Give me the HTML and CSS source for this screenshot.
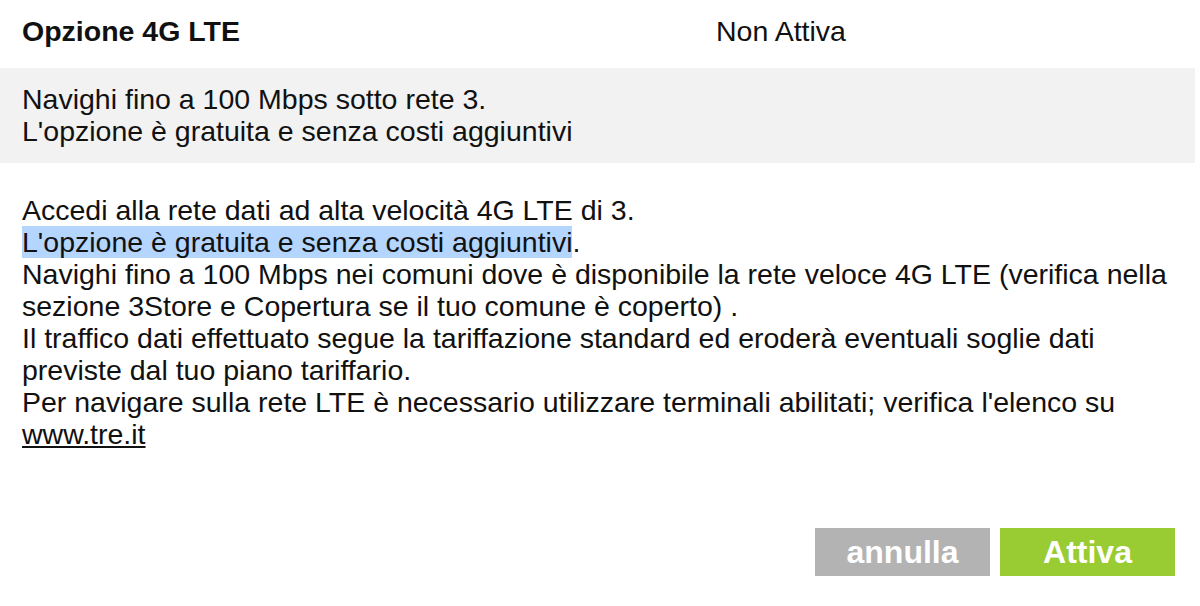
FILE: index.html
```html
<!DOCTYPE html>
<html lang="it">
<head>
    <meta charset="UTF-8">
    <meta name="viewport" content="width=device-width, initial-scale=1.0">
    <title>Opzione 4G LTE</title>
    <link rel="stylesheet" href="styles.css">
</head>
<body>
    <div class="panel">
        <div class="option-head">
            <div class="option-name">Opzione 4G LTE</div>
            <div class="option-state">Non Attiva</div>
        </div>

        <div class="summary">
            Navighi fino a 100 Mbps sotto rete 3.<br>
            L'opzione è gratuita e senza costi aggiuntivi
        </div>

        <div class="details">
            Accedi alla rete dati ad alta velocità 4G LTE di 3.<br>
            <span class="selected">L'opzione è gratuita e senza costi aggiuntivi</span>.<br>
            Navighi fino a 100 Mbps nei comuni dove è disponibile la rete veloce 4G LTE (verifica nella sezione 3Store e Copertura se il tuo comune è coperto) .<br>
            Il traffico dati effettuato segue la tariffazione standard ed eroderà eventuali soglie dati previste dal tuo piano tariffario.<br>
            Per navigare sulla rete LTE è necessario utilizzare terminali abilitati; verifica l'elenco su <a href="#">www.tre.it</a>
        </div>

        <div class="actions">
            <button class="btn btn-cancel" type="button">annulla</button>
            <button class="btn btn-confirm" type="button">Attiva</button>
        </div>
    </div>
</body>
</html>
```

FILE: styles.css
```css
* {
    margin: 0;
    padding: 0;
    box-sizing: border-box;
}

body {
    background: #fff;
    color: #111;
    font-family: "Liberation Sans", Arial, sans-serif;
    font-size: 28.5px;
    line-height: 32px;
}

.panel {
    width: 1195px;
}

.option-head {
    display: grid;
    grid-template-columns: 694px 1fr;
    padding: 15px 22px 0;
}

.option-name {
    font-weight: bold;
}

.summary {
    background: #f2f2f2;
    margin-top: 21px;
    padding: 15px 22px 16px;
}

.details {
    margin-top: 31px;
    padding: 0 12px 0 22px;
}

.selected {
    background: #b4d5fe;
}

.details a {
    color: #111;
    text-decoration: underline;
}

.actions {
    display: flex;
    justify-content: flex-end;
    gap: 10px;
    margin-top: 78px;
    padding-right: 20px;
}

.btn {
    width: 175px;
    height: 48px;
    border: none;
    color: #fff;
    font-family: "Liberation Sans", Arial, sans-serif;
    font-size: 32px;
    font-weight: bold;
    cursor: pointer;
}

.btn-cancel {
    background: #b3b3b3;
}

.btn-confirm {
    background: #99cc33;
}
```
